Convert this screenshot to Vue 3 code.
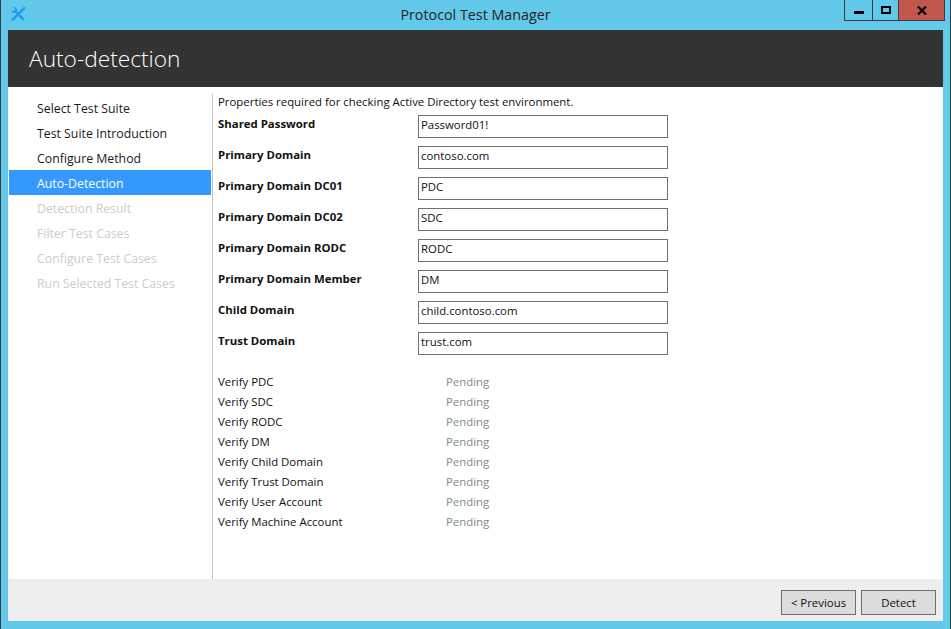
<template>
  <div class="window">
    <div class="titlebar">
      <svg class="logo" width="14" height="14" viewBox="0 0 14 14">
        <path d="M13.6 0.9 L1.6 12.6" stroke="#1c9fec" stroke-width="2.6" stroke-linecap="round" fill="none" />
        <path d="M0.2 2.4 L2.3 4.4 L4.3 2.4 L2.3 0.2 A3.5 3.5 0 0 1 6.1 4.6 L13.6 11.6 L11.6 13.7 L4.5 6.1 A3.5 3.5 0 0 1 0.2 2.4 Z" fill="#1c9fec" />
      </svg>
      <span class="title">Protocol Test Manager</span>
      <div class="controls">
        <div class="ctl min"><span class="min-glyph"></span></div>
        <div class="ctl max"><span class="max-glyph"></span></div>
        <div class="ctl close">
          <svg width="10" height="9" viewBox="0 0 10 9">
            <path d="M1 0.5 L9 8.5 M9 0.5 L1 8.5" stroke="#000" stroke-width="2.2" fill="none" />
          </svg>
        </div>
      </div>
    </div>
    <div class="client">
      <header class="header">Auto-detection</header>
      <div class="body">
        <nav class="nav">
          <div
            v-for="item in steps"
            :key="item.name"
            class="step"
            :class="item.state"
          >{{ item.name }}</div>
        </nav>
        <main class="content">
          <p class="intro">Properties required for checking Active Directory test environment.</p>
          <div class="fields">
            <div v-for="f in fields" :key="f.label" class="field">
              <label>{{ f.label }}</label>
              <input type="text" :value="f.value" />
            </div>
          </div>
          <div class="checks">
            <div v-for="c in checks" :key="c" class="check">
              <span class="check-name">{{ c }}</span>
              <span class="status">Pending</span>
            </div>
          </div>
        </main>
      </div>
      <footer class="footer">
        <button>&lt; Previous</button>
        <button>Detect</button>
      </footer>
    </div>
  </div>
</template>

<script setup>
const steps = [
  { name: 'Select Test Suite', state: '' },
  { name: 'Test Suite Introduction', state: '' },
  { name: 'Configure Method', state: '' },
  { name: 'Auto-Detection', state: 'active' },
  { name: 'Detection Result', state: 'disabled' },
  { name: 'Filter Test Cases', state: 'disabled' },
  { name: 'Configure Test Cases', state: 'disabled' },
  { name: 'Run Selected Test Cases', state: 'disabled' }
]

const fields = [
  { label: 'Shared Password', value: 'Password01!' },
  { label: 'Primary Domain', value: 'contoso.com' },
  { label: 'Primary Domain DC01', value: 'PDC' },
  { label: 'Primary Domain DC02', value: 'SDC' },
  { label: 'Primary Domain RODC', value: 'RODC' },
  { label: 'Primary Domain Member', value: 'DM' },
  { label: 'Child Domain', value: 'child.contoso.com' },
  { label: 'Trust Domain', value: 'trust.com' }
]

const checks = [
  'Verify PDC',
  'Verify SDC',
  'Verify RODC',
  'Verify DM',
  'Verify Child Domain',
  'Verify Trust Domain',
  'Verify User Account',
  'Verify Machine Account'
]
</script>

<style>
html, body {
  margin: 0;
  overflow: hidden;
}
</style>

<style scoped>
.window {
  box-sizing: border-box;
  width: 951px;
  height: 629px;
  display: flex;
  flex-direction: column;
  background: #63c9ea;
  border-left: 1px solid #3c3c3c;
  border-right: 1px solid #3c3c3c;
  padding: 0 7px 8px;
  font-family: "Open Sans", "Noto Sans", sans-serif;
  font-size: 11.4px;
  color: #111;
}

.titlebar {
  height: 30px;
  flex: none;
  position: relative;
  display: flex;
  justify-content: center;
  align-items: center;
}

.title {
  font-size: 14.3px;
  color: #222;
  padding-bottom: 1px;
}

.logo {
  position: absolute;
  left: 3px;
  top: 7px;
}

.controls {
  position: absolute;
  top: 0;
  right: -2px;
  display: flex;
  height: 21px;
  box-sizing: border-box;
  border: 1px solid #45393a;
  border-top: none;
}

.ctl {
  height: 20px;
  display: flex;
  align-items: center;
  justify-content: center;
}

.min {
  width: 27px;
  border-right: 1px solid #45393a;
}

.max {
  width: 25px;
}

.close {
  width: 45px;
  background: #c2574d;
  border-left: 1px solid #45393a;
}

.min-glyph {
  width: 10px;
  height: 3px;
  background: #000;
  margin-top: 5px;
}

.max-glyph {
  box-sizing: border-box;
  width: 10px;
  height: 8px;
  border: 2px solid #000;
}

.client {
  flex: 1;
  display: flex;
  flex-direction: column;
  background: #fff;
  min-height: 0;
}

.header {
  height: 57px;
  flex: none;
  background: #333;
  color: #fff;
  font-size: 22.7px;
  font-weight: 300;
  line-height: 58px;
  padding-left: 21px;
}

.body {
  flex: 1;
  display: flex;
  min-height: 0;
  padding-top: 7px;
}

.nav {
  width: 202px;
  flex: none;
  padding: 1px 1px 0;
}

.step {
  box-sizing: border-box;
  height: 25px;
  padding: 2px 0 0 28px;
  line-height: 24px;
  font-size: 12.3px;
  color: #1a1a1a;
}

.step.active {
  background: #3399ff;
  color: #fff;
}

.step.disabled {
  color: #ccc;
}

.content {
  flex: 1;
  border-left: 1px solid #c4c4c4;
  padding-left: 5px;
}

.intro {
  margin: 0;
  height: 16px;
  line-height: 16px;
}

.fields {
  display: flex;
  flex-direction: column;
  gap: 8px;
  padding-top: 2px;
}

.field {
  display: flex;
  align-items: flex-start;
  height: 23px;
}

.field label {
  width: 200px;
  font-weight: 700;
  line-height: 16px;
  padding-top: 4px;
}

.field input {
  box-sizing: border-box;
  width: 250px;
  height: 23px;
  margin: 3px 0 0;
  padding: 0 2px 4px;
  border: 1px solid #707070;
  border-radius: 0;
  font: inherit;
  color: #111;
  outline: none;
}

.checks {
  margin-top: 20px;
}

.check {
  display: flex;
  height: 20px;
  line-height: 20px;
}

.check-name {
  width: 228px;
}

.status {
  color: #808890;
}

.footer {
  height: 42px;
  flex: none;
  background: #eee;
  display: flex;
  justify-content: flex-end;
  gap: 5px;
  padding: 11px 7px 0 0;
  box-sizing: border-box;
}

.footer button {
  box-sizing: border-box;
  width: 75px;
  height: 25px;
  background: #dcdcdc;
  border: 1px solid #707070;
  border-radius: 0;
  font: inherit;
  color: #111;
  padding: 0;
}
</style>
